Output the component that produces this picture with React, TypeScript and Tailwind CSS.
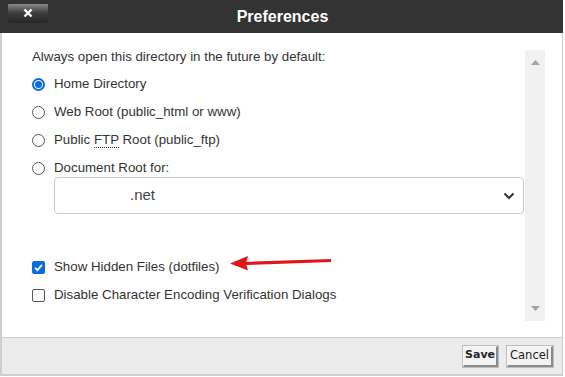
import React from "react";

function Radio({ checked, label }: { checked?: boolean; label: React.ReactNode }) {
  return (
    <div className="flex items-center h-[28px]">
      <span
        className={
          "w-[13px] h-[13px] rounded-full flex items-center justify-center mr-[9px] " +
          (checked ? "border-2 border-[#0a6cde] bg-white" : "border border-[#555] bg-white")
        }
      >
        {checked && <span className="w-[7px] h-[7px] rounded-full bg-[#0a6cde]" />}
      </span>
      <span>{label}</span>
    </div>
  );
}

function Check({ checked, label }: { checked?: boolean; label: string }) {
  return (
    <div className="flex items-center h-[28px]">
      <span
        className={
          "w-[13px] h-[13px] rounded-[2px] flex items-center justify-center mr-[9px] " +
          (checked ? "bg-[#0a6cde] border border-[#0a6cde]" : "border border-[#555] bg-white")
        }
      >
        {checked && (
          <svg width="11" height="11" viewBox="0 0 11 11">
            <path d="M2 5.8 L4.4 8.2 L9 2.8" stroke="white" strokeWidth="1.8" fill="none" />
          </svg>
        )}
      </span>
      <span>{label}</span>
    </div>
  );
}

export default function App() {
  return (
    <div
      className="w-[565px] h-[377px] bg-white relative overflow-hidden"
      style={{ fontFamily: "'Liberation Sans', Arial, sans-serif" }}
    >
      <div className="w-[563px] h-[376px] flex flex-col border-l-2 border-b-2 border-r border-[#cfcfcf]">
        {/* title bar */}
        <div className="h-[33px] bg-[#333333] relative flex items-center justify-center shrink-0 -ml-[2px] -mr-[1px]">
          <div className="absolute left-[8px] top-[4px] w-[40px] h-[19px] rounded-b-[4px] rounded-t-[1px] border-b border-[#1d2a33] bg-gradient-to-b from-[#8a8a8a] via-[#3e3c3c] to-[#2a2828] flex items-center justify-center">
            <svg width="10" height="10" viewBox="0 0 10 10">
              <path d="M1.5 1.5 L8.5 8.5 M8.5 1.5 L1.5 8.5" stroke="white" strokeWidth="2.4" />
            </svg>
          </div>
          <span className="text-white font-bold text-[16px] ml-[2px]">Preferences</span>
        </div>
        {/* content */}
        <div className="flex-1 flex text-[13.3px] text-[#333]">
          <div className="flex-1 pl-[30px] pt-[14px]">
            <div className="h-[20px] leading-[20px] mb-[3px]">Always open this directory in the future by default:</div>
            <Radio checked label="Home Directory" />
            <Radio label="Web Root (public_html or www)" />
            <Radio
              label={
                <>
                  Public <span className="border-b border-dotted border-[#333]">FTP</span> Root (public_ftp)
                </>
              }
            />
            <Radio label="Document Root for:" />
            <div className="ml-[22px] mt-[-5px] h-[37px] w-[470px] border border-[#cccccc] rounded-[4px] flex items-center justify-between pl-[75px] pr-[8px] text-[15px] text-[#444]">
              <span>.net</span>
              <svg width="12" height="8" viewBox="0 0 12 8">
                <path d="M1.5 1.5 L6 6 L10.5 1.5" stroke="#333" strokeWidth="2" fill="none" />
              </svg>
            </div>
            <div className="h-[39px]" />
            <Check checked label="Show Hidden Files (dotfiles)" />
            <Check label="Disable Character Encoding Verification Dialogs" />
          </div>
          <div className="w-[20px] mt-[17px] mb-[16px] bg-[#f1f1f1] flex flex-col items-center justify-between py-[10px] mr-[17px]">
            <svg width="9" height="5" viewBox="0 0 9 5">
              <path d="M0 5 L4.5 0 L9 5 Z" fill="#a3a3a3" />
            </svg>
            <svg width="9" height="5" viewBox="0 0 9 5">
              <path d="M0 0 L4.5 5 L9 0 Z" fill="#a3a3a3" />
            </svg>
          </div>
        </div>
        {/* footer */}
        <div className="h-[37px] shrink-0 bg-[#ececec] border-t border-[#cccccc] flex items-center justify-end gap-[9px] pr-[9px]" style={{ fontFamily: "'DejaVu Sans', Verdana, sans-serif" }}>
          <button className="h-[21px] px-[1px] text-[11px] font-bold text-[#222] bg-[#f3f3f3] border-t border-l border-[#fafafa] border-r-2 border-b-2 border-r-[#8a8a8a] border-b-[#8a8a8a] outline outline-1 outline-[#bdbdbd]">
            Save
          </button>
          <button className="h-[21px] px-[2px] text-[11.5px] text-[#222] bg-[#f3f3f3] border-t border-l border-[#fafafa] border-r-2 border-b-2 border-r-[#8a8a8a] border-b-[#8a8a8a] outline outline-1 outline-[#bdbdbd]">
            Cancel
          </button>
        </div>
      </div>
      {/* red arrow annotation */}
      <svg className="absolute left-[228px] top-[253px]" width="106" height="20" viewBox="0 0 106 20">
        <path d="M18 10.5 L103 7.5" stroke="#e0161b" strokeWidth="3.2" fill="none" />
        <path d="M2 10.5 L20 3 L18 10.5 L20 17.5 Z" fill="#e0161b" />
      </svg>
    </div>
  );
}
